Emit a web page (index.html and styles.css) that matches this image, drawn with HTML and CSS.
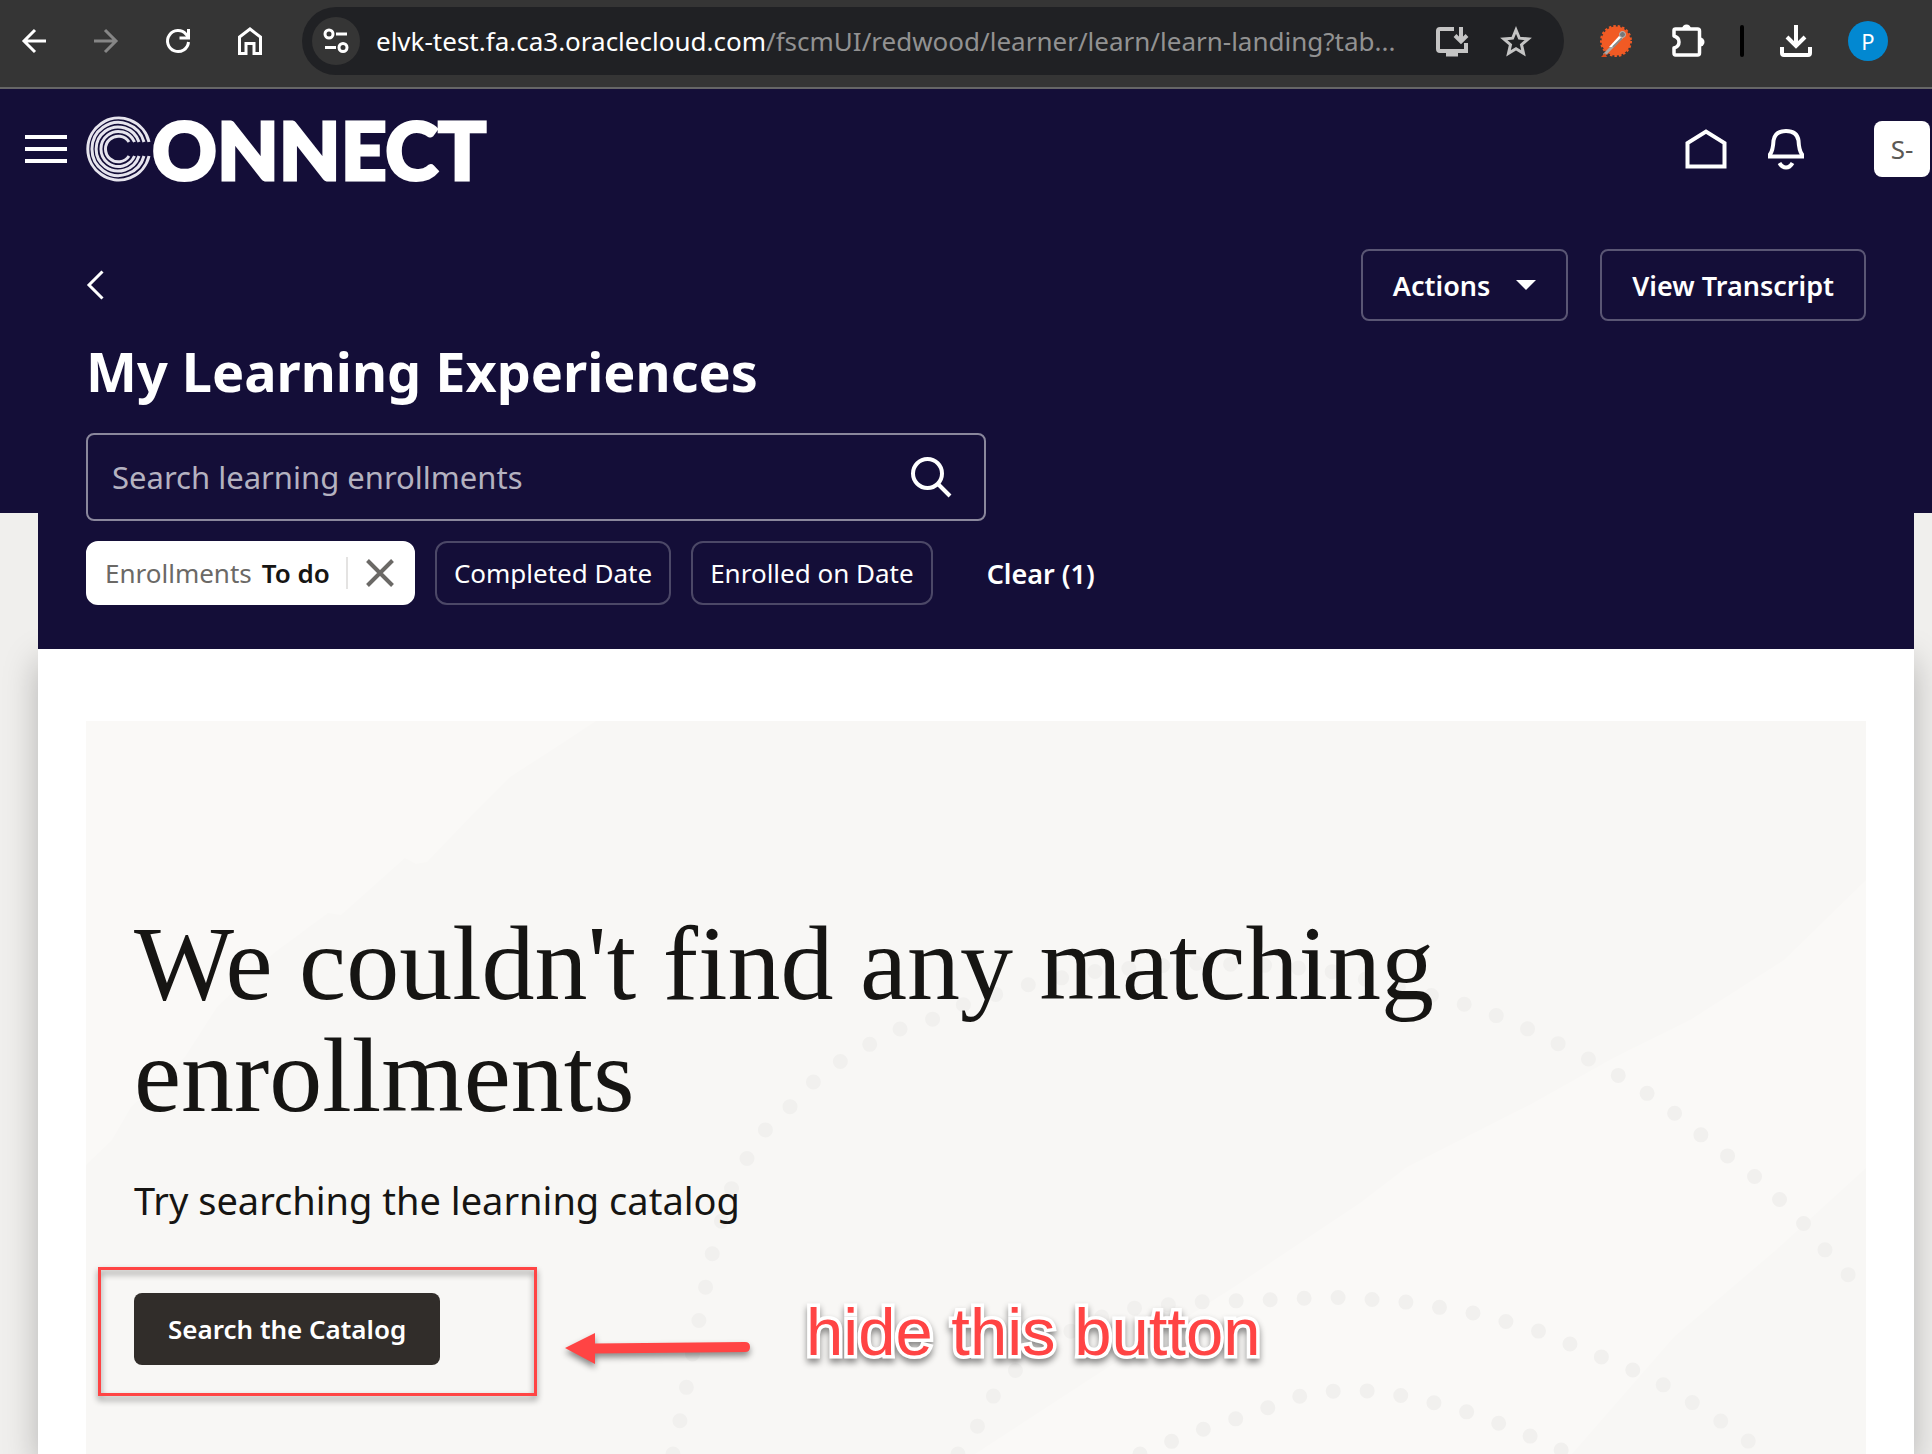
FILE: index.html
```html
<!DOCTYPE html>
<html lang="en">
<head>
    <meta charset="UTF-8">
    <meta name="viewport" content="width=device-width, initial-scale=1.0">
    <title>My Learning Experiences</title>
    <link rel="stylesheet" href="styles.css">
</head>
<body>

    <!-- browser toolbar -->
    <div class="toolbar">
        <button class="tool-btn" aria-label="Back">
            <svg width="32" height="32" viewBox="0 0 32 32" fill="none" stroke="#fff" stroke-width="3"><path d="M28 16H6M17 5L6 16l11 11"/></svg>
        </button>
        <button class="tool-btn" aria-label="Forward" disabled>
            <svg width="32" height="32" viewBox="0 0 32 32" fill="none" stroke="#868686" stroke-width="3"><path d="M4 16h22M15 5l11 11-11 11"/></svg>
        </button>
        <button class="tool-btn" aria-label="Reload">
            <svg width="32" height="32" viewBox="0 0 32 32" fill="none" stroke="#fff" stroke-width="3"><path d="M26.500 17A10.500 10.500 0 1 1 24 9.200L26.500 12M26.500 4v9h-9"/></svg>
        </button>
        <button class="tool-btn" aria-label="Home">
            <svg width="32" height="32" viewBox="0 0 32 32" fill="none" stroke="#fff" stroke-width="3"><path d="M5.500 28.500V12L16 4l10.500 8v16.500H20V18.500h-8v10z"/></svg>
        </button>

        <div class="omnibox">
            <button class="site-info" aria-label="View site information">
                <svg width="28" height="28" viewBox="0 0 28 28" fill="none" stroke="#fff" stroke-width="3"><circle cx="7" cy="7" r="4"/><path d="M14 7h11M3 20.500h11"/><circle cx="21" cy="20.500" r="4"/></svg>
            </button>
            <div class="url"><span class="url-host">elvk-test.fa.ca3.oraclecloud.com</span>/fscmUI/redwood/learner/learn/learn-landing?tab...</div>
            <button class="tool-btn" aria-label="Install app">
                <svg width="36" height="32" viewBox="0 0 36 32" fill="none" stroke="#c4c4c4" stroke-width="4"><path d="M20 4H6q-2 0-2 2v18q0 2 2 2h26V18M27 2v13M21 10.500l6 6 6-6"/><path d="M12 29h12" stroke-width="5"/></svg>
            </button>
            <button class="tool-btn" aria-label="Bookmark this tab">
                <svg width="34" height="32" viewBox="0 0 34 32" fill="none" stroke="#c4c4c4" stroke-width="3"><path d="M17 5l3.400 8.200 8.800.7-6.700 5.800 2 8.600L17 23.700l-7.500 4.600 2-8.600-6.700-5.800 8.800-.7z"/></svg>
            </button>
        </div>

        <button class="tool-btn" aria-label="Postman">
            <svg width="32" height="32" viewBox="0 0 32 32"><circle cx="16" cy="16" r="14.500" fill="#f15a24"/><circle cx="16" cy="16" r="15" fill="none" stroke="#f15a24" stroke-width="2" stroke-dasharray="2.500 2"/><path d="M4 30L17 17" stroke="#a9a9a9" stroke-width="3"/><path d="M9 22l10-11 4 2L12 22z" fill="#fff"/><path d="M13 22l9-9" stroke="#888" stroke-width="2"/><circle cx="22.500" cy="9.500" r="3" fill="#777" stroke="#b9b9b9"/><path d="M1 32l4-4 2 4z" fill="#d84a1b"/></svg>
        </button>
        <button class="tool-btn" aria-label="Extensions">
            <svg width="36" height="36" viewBox="0 0 36 36"><path d="M5.500 6h22q2 0 2 2v22q0 2-2 2h-22q-1.500 0-1.500-2v-5q5-1.500 5-6t-5-6V7.500q0-1.500 1.500-1.500z" fill="none" stroke="#fff" stroke-width="3.500" stroke-linejoin="round"/><path d="M12 6a4.500 4.500 0 0 1 9 0z" fill="#fff"/><path d="M30 14.500a4.500 4.500 0 0 1 0 9z" fill="#fff"/></svg>
        </button>
        <span class="divider"></span>
        <button class="tool-btn" aria-label="Downloads">
            <svg width="36" height="36" viewBox="0 0 36 36" fill="none" stroke="#fff" stroke-width="4"><path d="M18 2v20M9 14l9 9 9-9M4 24v6q0 2 2 2h24q2 0 2-2v-6"/></svg>
        </button>
        <button class="tool-btn" aria-label="Profile"><span class="profile">P</span></button>
    </div>

    <div class="page">
        <header class="app-header">
            <button class="menu-btn" aria-label="Navigation menu">
                <svg width="42" height="28" viewBox="0 0 42 28" stroke="#fff" stroke-width="4"><path d="M0 2h42M0 14h42M0 26h42"/></svg>
            </button>
            <a class="logo" href="#" aria-label="Connect">
                <svg width="66" height="66" viewBox="0 0 66 66" fill="none" stroke="#e6e4ee" stroke-width="3">
                    <path d="M63 26A31 31 0 1 0 63 40"/>
                    <path d="M58 26A26.500 26.500 0 1 0 58 40"/>
                    <path d="M53 26A22 22 0 1 0 53 40"/>
                    <path d="M48.500 26A17.500 17.500 0 1 0 48.500 40"/>
                    <path d="M43 26A12.800 12.800 0 1 0 43 40"/>
                </svg>
                <span class="logo-text">ONNECT</span>
            </a>
            <nav class="header-icons">
                <a href="#" aria-label="Home">
                    <svg width="42" height="42" viewBox="0 0 42 42" fill="none" stroke="#fff" stroke-width="4"><path d="M2.500 38.500V15L21 3.500 39.500 15v23.500z"/></svg>
                </a>
                <a href="#" aria-label="Notifications">
                    <svg width="38" height="42" viewBox="0 0 38 42" fill="none" stroke="#fff" stroke-width="4"><path d="M3 28.500v-2q3-4 3.500-14Q8 3 19 3t12.500 9.500q.5 10 3.500 14v2z"/><path d="M12.500 35q2.500 4.500 6.500 4.500t6.500-4.500"/></svg>
                </a>
            </nav>
            <button class="avatar">S-</button>
        </header>

        <section class="hero">
            <div class="hero-top">
                <a class="back" href="#" aria-label="Go back">
                    <svg width="18" height="30" viewBox="0 0 18 30" fill="none" stroke="#fff" stroke-width="3"><path d="M16.500 1.500L3 15l13.500 13.500"/></svg>
                </a>
                <button class="btn">Actions
                    <svg width="20" height="10" viewBox="0 0 20 10"><path d="M0 0h20L10 10z" fill="#fff"/></svg>
                </button>
                <button class="btn">View Transcript</button>
            </div>
            <h1>My Learning Experiences</h1>
            <form class="search">
                <input type="search" aria-label="Search learning enrollments" placeholder="Search learning enrollments">
                <button type="button" aria-label="Search">
                    <svg width="42" height="42" viewBox="0 0 42 42" fill="none" stroke="#fff" stroke-width="4"><circle cx="17.500" cy="17.500" r="14.500"/><path d="M28 28l12 12"/></svg>
                </button>
            </form>
            <div class="filters">
                <div class="chip chip-selected">
                    <span>Enrollments</span>
                    <strong>To do</strong>
                    <button aria-label="Remove Enrollments filter">
                        <svg width="28" height="28" viewBox="0 0 28 28" fill="none" stroke="#6b6966" stroke-width="4"><path d="M1.500 1.500l25 25M26.500 1.500l-25 25"/></svg>
                    </button>
                </div>
                <button class="chip">Completed Date</button>
                <button class="chip">Enrolled on Date</button>
                <button class="clear">Clear (1)</button>
            </div>
        </section>

        <main class="content">
            <div class="empty">
                <svg class="art" viewBox="86 721 1780 733" preserveAspectRatio="xMinYMin slice" aria-hidden="true">
                    <path fill="#faf9f7" d="M86 721H596L555 748 510 777 472 815 427 862 416 864 405 858 341 915 328 913 274 953 217 1007 185 1057 131 1107 112 1140 86 1165z"/>
                    <path fill="#faf9f7" d="M1866 880L1784 960 1690 1020 1615 1057 1533 1103 1407 1167 1360 1203 1234 1287 1093 1377 975 1454H1572L1674 1337 1776 1250 1866 1168z"/>
                    <g class="dots">
                        <polyline points="673,1454 683,1406 695,1340 714,1245 733,1184 750,1153 768,1126 793,1104 818,1077 841,1061 872,1043 900,1029 933,1019 967,1003 1027,985 1090,972 1190,963 1260,965 1325,970 1390,985 1457,1002 1482,1010 1515,1023 1545,1037 1608,1069 1661,1102 1712,1144 1763,1183 1811,1231 1831,1258 1866,1292"/>
                        <polyline points="958,1454 977,1427 995,1393 1012,1373 1067,1333 1098,1318 1135,1308 1198,1302 1265,1300 1330,1297 1399,1301 1469,1312 1531,1328 1592,1353 1652,1378 1711,1414 1766,1454"/>
                        <polyline points="1140,1454 1195,1432 1257,1412 1292,1398 1318,1392 1353,1390 1385,1392 1453,1407 1512,1428 1570,1454"/>
                    </g>
                </svg>
                <h2>We couldn't find any matching enrollments</h2>
                <p>Try searching the learning catalog</p>
                <div class="cta">
                    <button class="btn-primary">Search the Catalog</button>
                    <div class="mark">
                        <svg class="arrow" width="186" height="40" viewBox="0 0 186 40"><path d="M0 20L30 5v10.500L180 14q5 0 5 5t-5 5L30 25.500V36z" fill="#ff4444"/></svg>
                        <span class="note">hide this button</span>
                    </div>
                </div>
            </div>
        </main>
    </div>

</body>
</html>
```
FILE: styles.css
```css
* {
  box-sizing: border-box;
}

body {
  margin: 0;
  min-height: 100vh;
  display: flex;
  flex-direction: column;
  font-family: "Noto Sans", "Open Sans", sans-serif;
  color: #161513;
  overflow: hidden;
}

button {
  border: 0;
  padding: 0;
  background: none;
  font-family: inherit;
  color: inherit;
  cursor: pointer;
}

svg {
  display: block;
}

/* browser toolbar */
.toolbar {
  display: flex;
  align-items: center;
  gap: 24px;
  height: 89px;
  padding: 0 40px 5px 10px;
  background: #353535;
  border-bottom: 2px solid #666;
}

.tool-btn {
  flex: none;
  width: 48px;
  height: 48px;
  display: flex;
  align-items: center;
  justify-content: center;
}

.omnibox {
  flex: 1;
  min-width: 0;
  height: 68px;
  margin: 0 4px;
  padding: 0 24px 0 10px;
  display: flex;
  align-items: center;
  gap: 16px;
  border-radius: 34px;
  background: #202124;
}

.site-info {
  flex: none;
  width: 48px;
  height: 48px;
  border-radius: 50%;
  background: #353535;
  display: flex;
  align-items: center;
  justify-content: center;
}

.url {
  flex: 1;
  min-width: 0;
  overflow: hidden;
  white-space: nowrap;
  font-size: 26px;
  color: #929292;
}

.url-host {
  color: #fff;
}

.divider {
  width: 4px;
  height: 32px;
  margin: 0 4px;
  border-radius: 2px;
  background: #000;
}

.profile {
  width: 40px;
  height: 40px;
  border-radius: 50%;
  background: #0288d1;
  color: #fff;
  font-size: 22px;
  line-height: 40px;
  text-align: center;
}

/* page */
.page {
  flex: 1;
  display: flex;
  flex-direction: column;
  background: linear-gradient(#140e38 424px, #f0efed 424px);
}

.app-header {
  height: 120px;
  padding: 0 2px 0 25px;
  display: flex;
  align-items: center;
}

.logo {
  display: flex;
  align-items: center;
  margin-left: 19px;
  color: #fff;
  text-decoration: none;
}

.logo-text {
  font-family: Lato, sans-serif;
  font-weight: 900;
  font-size: 80px;
  line-height: 62px;
  -webkit-text-stroke: 3px #fff;
}

.header-icons {
  display: flex;
  align-items: center;
  gap: 40px;
  margin-left: auto;
}

.avatar {
  width: 56px;
  height: 56px;
  margin-left: 69px;
  border-radius: 8px;
  background: #fff;
  color: #5b5955;
  font-size: 26px;
}

.hero {
  position: relative;
  z-index: 1;
  margin: 0 18px 0 38px;
  padding: 40px 48px 44px;
  background: #140e38;
  color: #fff;
}

.hero-top {
  display: flex;
  align-items: center;
  gap: 32px;
}

.back {
  margin-right: auto;
}

.btn {
  display: flex;
  align-items: center;
  gap: 26px;
  height: 72px;
  padding: 0 30px;
  border: 2px solid #5a5674;
  border-radius: 8px;
  font-size: 27px;
  font-weight: 600;
}

h1 {
  margin: 14px 0 26px;
  font-size: 54px;
  line-height: 72px;
  font-weight: 700;
}

.search {
  display: flex;
  align-items: center;
  max-width: 900px;
  height: 88px;
  padding: 0 32px 0 24px;
  border: 2px solid #8a879c;
  border-radius: 8px;
}

.search input {
  flex: 1;
  min-width: 0;
  border: 0;
  padding: 0;
  background: none;
  outline: none;
  font-family: inherit;
  font-size: 31px;
  color: #fff;
}

.search input::placeholder {
  color: #b4b2c0;
}

.filters {
  display: flex;
  gap: 20px;
  margin-top: 20px;
}

.chip {
  display: flex;
  align-items: center;
  height: 64px;
  padding: 0 17px;
  border: 2px solid #4c4867;
  border-radius: 12px;
  font-size: 26px;
}

.chip-selected {
  gap: 10px;
  border-color: #fff;
  background: #fff;
  color: #6b6966;
}

.chip-selected strong {
  font-weight: 600;
  color: #161513;
}

.chip-selected button {
  height: 32px;
  margin-left: 6px;
  padding: 0 2px 0 18px;
  border-left: 2px solid #e4e3e2;
}

.clear {
  margin-left: 34px;
  font-size: 27px;
  font-weight: 600;
}

.content {
  flex: 1;
  display: flex;
  flex-direction: column;
  margin: 0 18px 0 38px;
  padding: 72px 48px 0;
  background: #fff;
  box-shadow: 0 12px 32px rgba(0, 0, 0, 0.25);
}

.empty {
  flex: 1;
  position: relative;
  padding: 187px 48px 48px;
  background: #f8f7f5;
}

.empty > * {
  position: relative;
}

.empty > .art {
  position: absolute;
  top: 0;
  left: 0;
  width: 100%;
  height: 100%;
}

.dots {
  fill: none;
  stroke: #f1f0ee;
  stroke-width: 15px;
  stroke-linecap: round;
  stroke-dasharray: 0 34;
}

h2 {
  max-width: 1400px;
  margin: 0 0 40px;
  font-family: "Liberation Serif", Georgia, serif;
  font-size: 106px;
  line-height: 112px;
  font-weight: 400;
}

p {
  margin: 0 0 65px;
  font-size: 38px;
  line-height: 56px;
}

.cta {
  display: flex;
}

.btn-primary {
  height: 72px;
  padding: 0 34px;
  border-radius: 8px;
  background: #312d2a;
  color: #fff;
  font-size: 26px;
  font-weight: 600;
}

/* red callout drawn over the card */
.mark {
  position: absolute;
  top: -26px;
  left: -36px;
  width: 439px;
  height: 129px;
  border: 3px solid #ff4444;
  filter: drop-shadow(0 4px 3px rgba(0, 0, 0, 0.45));
  pointer-events: none;
}

.arrow {
  position: absolute;
  left: 464px;
  top: 58px;
}

.note {
  position: absolute;
  left: 705px;
  top: 22px;
  font-family: "Liberation Sans", Arial, sans-serif;
  font-size: 67px;
  line-height: 80px;
  white-space: nowrap;
  color: #ff4444;
  -webkit-text-stroke: 7px #fff;
  paint-order: stroke fill;
}
```
